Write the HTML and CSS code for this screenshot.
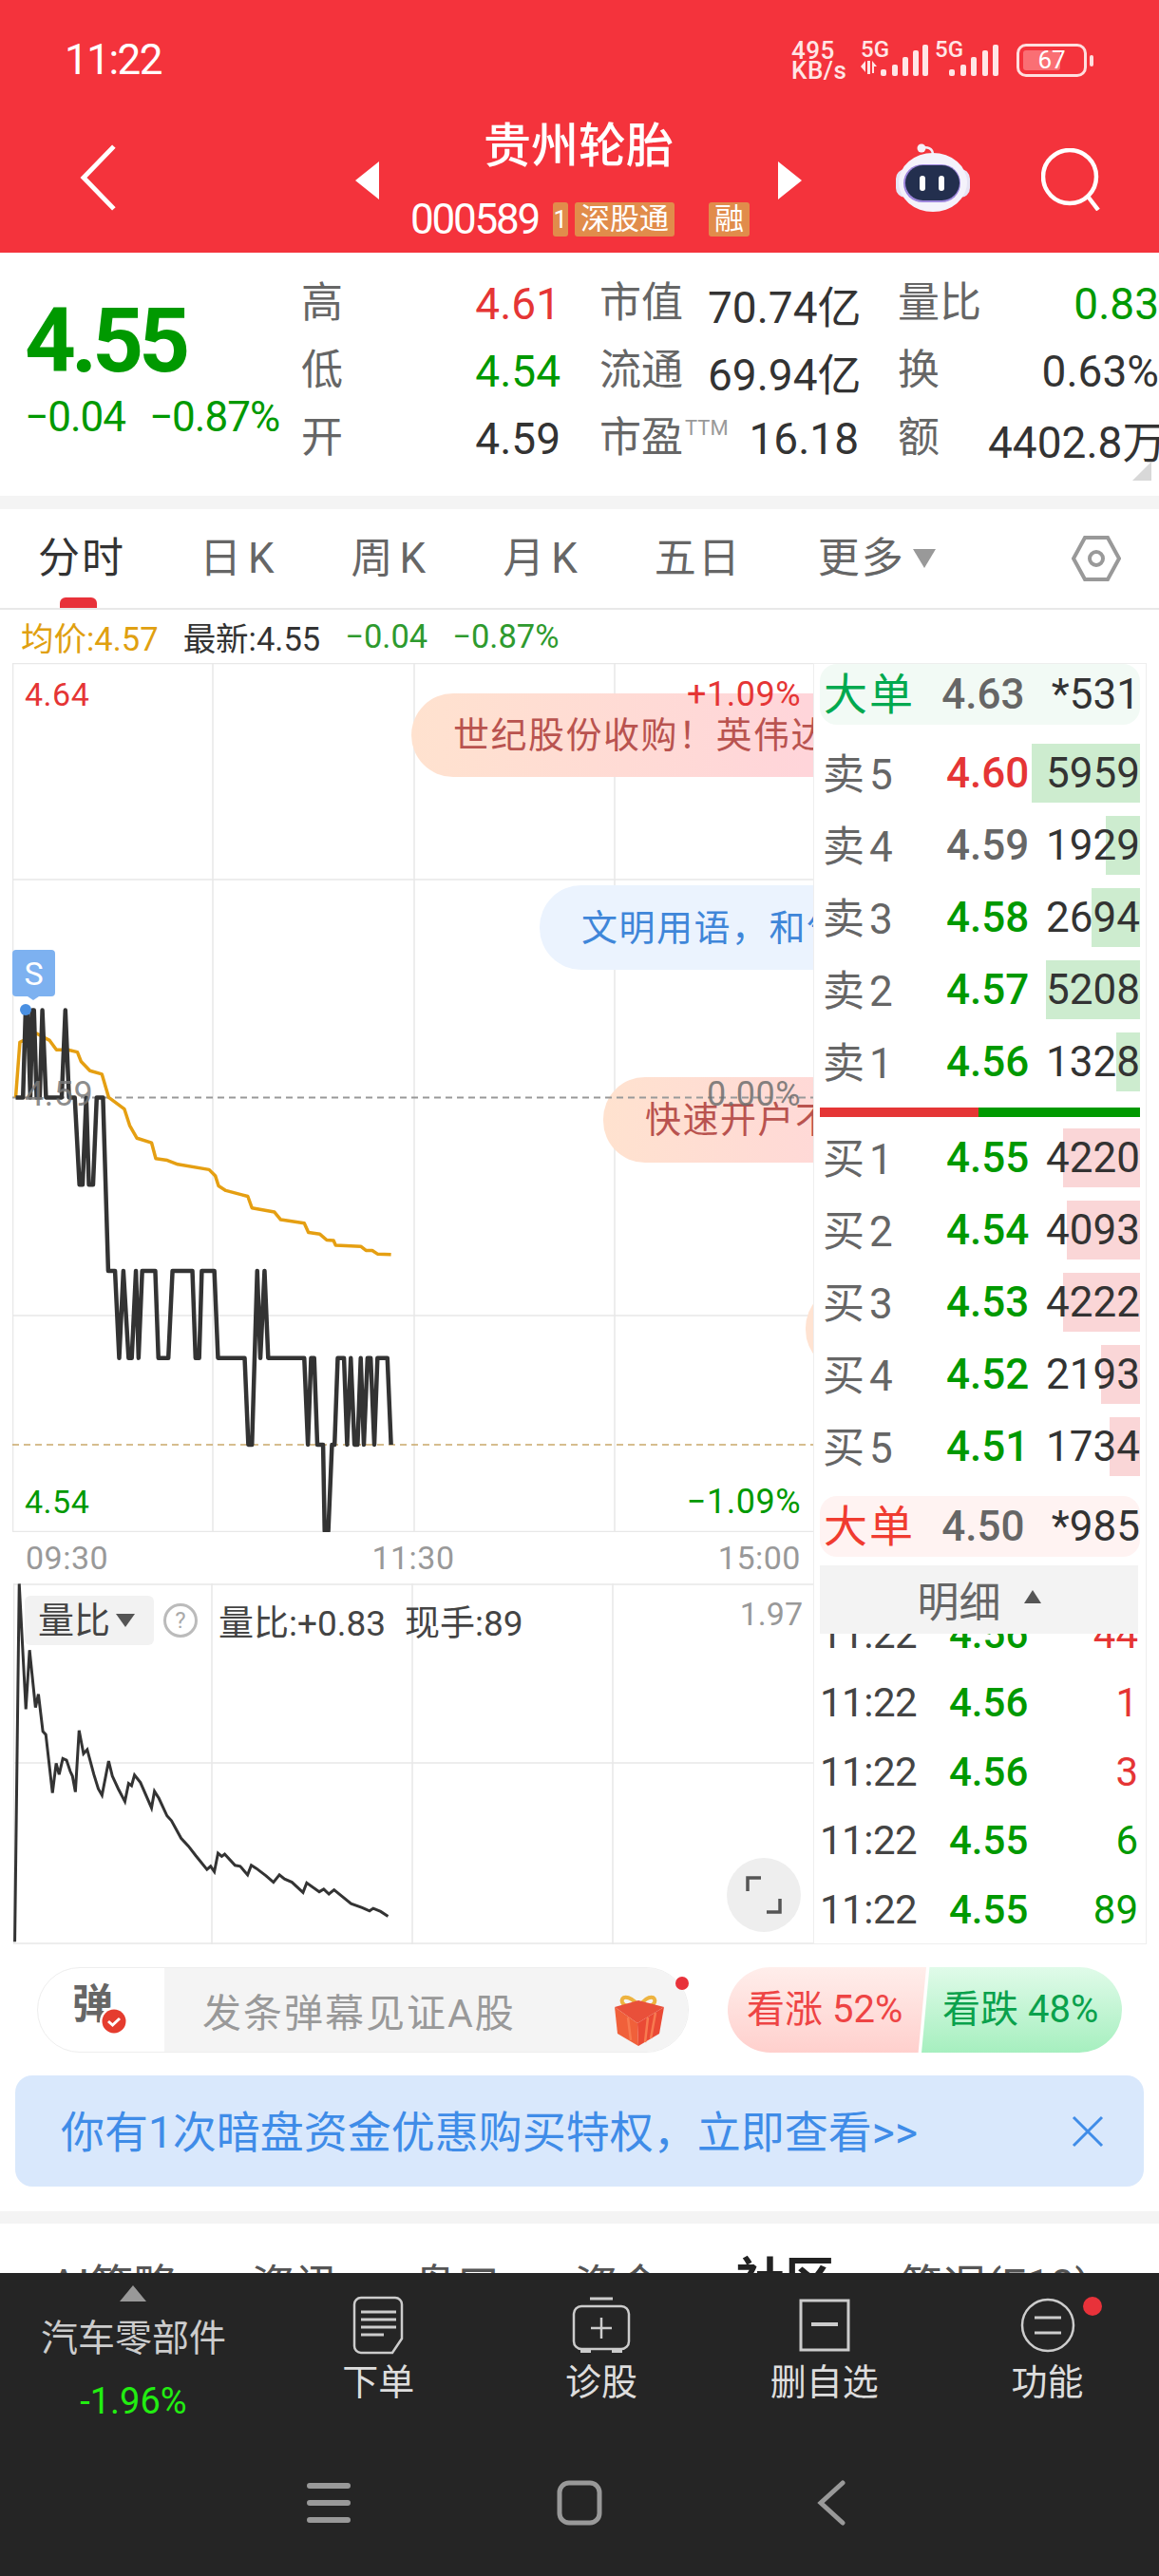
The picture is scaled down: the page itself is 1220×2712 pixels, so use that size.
FILE: index.html
```html
<!DOCTYPE html>
<html lang="zh">
<head>
<meta charset="utf-8">
<title>贵州轮胎</title>
<link rel="stylesheet" href="styles.css">
</head>
<body>
<div class="page">
  <header class="head">
    <div class="status">
      <span class="clock">11:22</span>
      <div class="sys">
        <div class="speed"><span>495</span><span>KB/s</span></div>
        <div class="sim"><span>5G</span>
          <svg width="72" height="34" viewBox="0 0 72 34"><g fill="#ffe6e6"><path d="M0 23 L5 17 V29 Z M7 17 H10 V31 H7 Z M12 17 L17 23 H14 V30 H12 Z"/><rect x="21" y="26" width="6" height="7" rx="2"/><rect x="33" y="21" width="6" height="12" rx="2"/><rect x="44" y="13" width="6" height="20" rx="2"/><rect x="55" y="6" width="6" height="27" rx="2"/><rect x="65" y="0" width="6" height="33" rx="2"/></g></svg>
        </div>
        <div class="sim"><span>5G</span>
          <svg width="54" height="34" viewBox="0 0 54 34"><g fill="#ffe6e6"><rect x="0" y="26" width="6" height="7" rx="2"/><rect x="12" y="21" width="6" height="12" rx="2"/><rect x="23" y="13" width="6" height="20" rx="2"/><rect x="35" y="6" width="6" height="27" rx="2"/><rect x="46" y="0" width="6" height="33" rx="2"/></g></svg>
        </div>
        <div class="batt"><div class="batt-body"><span class="batt-fill"></span><span class="batt-num">67</span></div><span class="batt-cap"></span></div>
      </div>
    </div>
    <div class="nav">
      <svg class="back" width="40" height="70" viewBox="0 0 40 70"><path d="M36 2 L4 35 L36 68" fill="none" stroke="#fff" stroke-width="5"/></svg>
      <div class="title-wrap">
        <span class="tri-l"></span>
        <div class="title">
          <div class="name">贵州轮胎</div>
          <div class="code"><span class="code-num">000589</span><span class="tag tag-i">1</span><span class="tag tag-s">深股通</span><span class="tag tag-r">融</span></div>
        </div>
        <span class="tri-r"></span>
      </div>
      <svg class="robot" width="78" height="76" viewBox="0 0 78 76">
        <path d="M27 6 C33 4 39 6 39 13" fill="none" stroke="#f2eef8" stroke-width="2.5"/>
        <circle cx="27" cy="6" r="4.5" fill="#f6f1fa"/>
        <rect x="0" y="28" width="78" height="30" rx="10" fill="#e6e4f4"/>
        <ellipse cx="39" cy="42" rx="36" ry="31" fill="#f4f2fb"/>
        <rect x="8" y="23" width="60" height="40" rx="20" fill="#9d86dc"/>
        <rect x="10" y="24" width="57" height="37" rx="18.5" fill="#232f4e"/>
        <rect x="25" y="35" width="6" height="16" rx="3" fill="#fff"/>
        <rect x="45" y="35" width="6" height="16" rx="3" fill="#fff"/>
      </svg>
      <svg class="search" width="64" height="66" viewBox="0 0 64 66"><circle cx="30" cy="30" r="28" fill="none" stroke="#fff" stroke-width="4.5"/><path d="M50 52 L60 65" stroke="#fff" stroke-width="4.5"/></svg>
    </div>
  </header>

  <section class="quote">
    <div class="now">
      <div class="price">4.55</div>
      <div class="chg"><span>−0.04</span><span>−0.87%</span></div>
    </div>
    <div class="stats">
      <span class="lb">高</span><span class="val up">4.61</span><span class="lb lb-m">市值</span><span class="val">70.74亿</span><span class="lb lb-m">量比</span><span class="val down">0.83</span>
      <span class="lb">低</span><span class="val down">4.54</span><span class="lb lb-m">流通</span><span class="val">69.94亿</span><span class="lb lb-m">换</span><span class="val">0.63%</span>
      <span class="lb">开</span><span class="val">4.59</span><span class="lb lb-m">市盈<sup class="ttm">TTM</sup></span><span class="val">16.18</span><span class="lb lb-m">额</span><span class="val">4402.8万</span>
    </div>
    <span class="corner"></span>
  </section>

  <nav class="tabs">
    <span class="tab tab-on">分时</span>
    <span class="tab tab-k">日K</span>
    <span class="tab tab-k">周K</span>
    <span class="tab tab-k">月K</span>
    <span class="tab">五日</span>
    <span class="tab tab-more">更多<i class="caret"></i></span>
    <svg class="hex" width="52" height="50" viewBox="0 0 52 50"><path d="M14 3 H38 L50 25 L38 47 H14 L2 25 Z" fill="none" stroke="#999" stroke-width="4"/><circle cx="26" cy="25" r="7" fill="none" stroke="#999" stroke-width="4"/></svg>
  </nav>

  <div class="legend">
    <span class="lg-avg">均价:4.57</span><span class="lg-new">最新:4.55</span><span class="lg-d">−0.04</span><span class="lg-d">−0.87%</span>
  </div>

  <div class="board">
    <div class="charts">
      <div class="price-chart">
        <svg class="plot" width="847" height="915" viewBox="13 698 847 915">
          <g class="grid">
            <path d="M13 698.5H860M13 926H860M13 1385H860M13 1612.5H860M13.5 698V1613M224 698V1613M436 698V1613M647 698V1613"/>
          </g>
          <g class="pills">
            <rect x="433" y="730" width="520" height="88" rx="44" fill="url(#pw)"/>
            <rect x="568" y="932" width="400" height="89" rx="44" fill="#ebf3fe"/>
            <rect x="635" y="1134" width="400" height="90" rx="44" fill="url(#pw)"/>
            <rect x="848" y="1354" width="300" height="90" rx="44" fill="#ffe3d2"/>
          </g>
          <defs><linearGradient id="pw" x1="0" x2="1" y1="0" y2="0"><stop offset="0" stop-color="#ffe2cf"/><stop offset=".8" stop-color="#ffd5da"/></linearGradient></defs>
          <path class="dash-gray" d="M13 1155.5H860"/>
          <path class="dash-gold" d="M13 1521H860"/>
          <g transform="translate(0,690) scale(.5503,.6124)">
            <polyline class="ln-avg" points="30,760 38,665 50,660 70,650 95,662 108,678 130,678 148,682 155,698 172,714 195,720 208,760 238,780 248,808 262,830 290,838 298,865 320,868 340,875 400,884 412,895 418,912 432,920 474,930 482,950 525,957 537,970 582,976 590,992 612,995 625,1005 638,1006 642,1014 690,1016 700,1023 712,1023 722,1029 748,1030"/>
            <polyline class="ln-px" points="30,760 44,760 49,610 53,610 58,760 62,610 65,610 70,760 76,760 81,610 88,760 118,760 125,610 132,760 143,760 152,910 158,910 165,760 170,910 178,910 185,760 197,760 207,1058 220,1058 228,1208 236,1058 246,1208 252,1208 260,1058 265,1208 272,1058 297,1058 303,1208 322,1208 330,1058 368,1058 374,1208 381,1208 386,1058 410,1058 417,1208 468,1208 475,1357 482,1357 492,1058 498,1208 506,1058 513,1208 582,1208 589,1357 595,1208 601,1208 607,1357 618,1357 621,1505 628,1505 635,1357 640,1357 646,1208 658,1208 664,1357 671,1208 678,1357 684,1357 690,1208 696,1357 703,1208 709,1208 716,1357 722,1208 741,1208 748,1357"/>
          </g>
          <circle cx="27" cy="1063" r="6" fill="#4a90e2"/>
          <path d="M13 1004a4 4 0 0 1 4-4h37a4 4 0 0 1 4 4v41a4 4 0 0 1-4 4H41l-6 4-6-4H17a4 4 0 0 1-4-4z" fill="#7db1f0"/>
        </svg>
        <span class="s-mark">S</span>
        <span class="pill-t pt1">世纪股份收购！英伟达</span>
        <span class="pill-t pt2">文明用语，和气</span>
        <span class="pill-t pt3">快速开户不</span>
        <span class="ax ax-tl up">4.64</span>
        <span class="ax ax-tr up">+1.09%</span>
        <span class="ax ax-ml">4.59</span>
        <span class="ax ax-mr">0.00%</span>
        <span class="ax ax-bl down">4.54</span>
        <span class="ax ax-br down">−1.09%</span>
      </div>
      <div class="times"><span>09:30</span><span>11:30</span><span>15:00</span></div>
      <div class="vol-chart">
        <svg class="plot" width="842" height="380" viewBox="14 1667 842 380">
          <g class="grid"><path d="M14 1668H856M14 1856H856M14 2046H856M14.5 1667V2047M223 1667V2047M434 1667V2047M645 1667V2047"/></g>
          <g transform="translate(0,1650) scale(.778,.3356)">
            <polyline class="ln-vol" points="20,1175 26,52 35,445 40,260 48,440 52,398 58,515 62,525 71,708 76,615 80,650 85,600 90,605 95,640 98,655 102,705 107,512 113,585 118,572 127,650 133,695 138,715 147,608 152,655 160,695 169,735 174,678 178,685 182,652 190,675 205,755 209,703 215,725 226,780 232,795 245,850 255,875 265,905 280,948 285,938 290,955 295,897 300,907 304,900 318,935 325,938 335,965 340,935 347,945 360,968 370,988 378,965 385,978 395,988 410,1020 415,990 432,1018 438,1010 445,1025 452,1012 475,1055 490,1068 500,1078 505,1070 515,1080 525,1095"/>
          </g>
        </svg>
        <div class="vol-bar">
          <span class="chip">量比<i class="chip-caret"></i></span>
          <span class="qmark">?</span>
          <span class="vol-txt">量比:+0.83</span>
          <span class="vol-txt">现手:89</span>
        </div>
        <span class="vol-max">1.97</span>
        <span class="expand"><svg width="38" height="40" viewBox="0 0 38 40"><path d="M2 16V2H16M36 24V38H22" fill="none" stroke="#555" stroke-width="3.5"/></svg></span>
      </div>
    </div>

    <aside class="side">
      <div class="big big-g"><span class="big-l lg">大单</span><span class="p gray">4.63</span><span class="q">*531</span></div>
      <div class="book book-s">
        <div class="row"><span class="l">卖5</span><span class="p up">4.60</span><span class="q"><i class="bar bar-g" style="width:114px"></i><b>5959</b></span></div>
        <div class="row"><span class="l">卖4</span><span class="p gray">4.59</span><span class="q"><i class="bar bar-g" style="width:36px"></i><b>1929</b></span></div>
        <div class="row"><span class="l">卖3</span><span class="p down">4.58</span><span class="q"><i class="bar bar-g" style="width:51px"></i><b>2694</b></span></div>
        <div class="row"><span class="l">卖2</span><span class="p down">4.57</span><span class="q"><i class="bar bar-g" style="width:99px"></i><b>5208</b></span></div>
        <div class="row"><span class="l">卖1</span><span class="p down">4.56</span><span class="q"><i class="bar bar-g" style="width:25px"></i><b>1328</b></span></div>
      </div>
      <div class="split"><i class="split-r"></i><i class="split-g"></i></div>
      <div class="book book-b">
        <div class="row"><span class="l">买1</span><span class="p down">4.55</span><span class="q"><i class="bar bar-r" style="width:81px"></i><b>4220</b></span></div>
        <div class="row"><span class="l">买2</span><span class="p down">4.54</span><span class="q"><i class="bar bar-r" style="width:77px"></i><b>4093</b></span></div>
        <div class="row"><span class="l">买3</span><span class="p down">4.53</span><span class="q"><i class="bar bar-r" style="width:81px"></i><b>4222</b></span></div>
        <div class="row"><span class="l">买4</span><span class="p down">4.52</span><span class="q"><i class="bar bar-r" style="width:41px"></i><b>2193</b></span></div>
        <div class="row"><span class="l">买5</span><span class="p down">4.51</span><span class="q"><i class="bar bar-r" style="width:32px"></i><b>1734</b></span></div>
      </div>
      <div class="big big-r"><span class="big-l lr">大单</span><span class="p gray">4.50</span><span class="q">*985</span></div>
      <div class="ticks">
        <div class="tick"><span>11:22</span><span class="down">4.56</span><span class="up">44</span></div>
        <div class="tick"><span>11:22</span><span class="down">4.56</span><span class="up">1</span></div>
        <div class="tick"><span>11:22</span><span class="down">4.56</span><span class="up">3</span></div>
        <div class="tick"><span>11:22</span><span class="down">4.55</span><span class="down">6</span></div>
        <div class="tick"><span>11:22</span><span class="down">4.55</span><span class="down">89</span></div>
      </div>
      <div class="detail-h">明细<i class="up-tri"></i></div>
    </aside>
  </div>

  <div class="comment">
    <div class="input">
      <div class="dan"><span class="dan-c">弹</span><svg class="dan-ok" width="30" height="30" viewBox="0 0 30 30"><circle cx="15" cy="15" r="15" fill="#fff"/><circle cx="15" cy="15" r="12.5" fill="#e53c2e"/><path d="M9 15 L13.5 19 L21 12" fill="none" stroke="#fff" stroke-width="3"/></svg></div>
      <div class="ph"><span>发条弹幕见证A股</span>
        <svg class="gift" width="54" height="58" viewBox="0 0 54 58">
          <path d="M25 13 C14 1 6 4 8 10 C10 15 19 15 25 13 C31 15 40 15 42 10 C44 4 36 1 27 13" fill="none" stroke="#edb33f" stroke-width="4"/>
          <path d="M0 15 L25 8 L52 15 L24 32 Z" fill="#e9503a"/>
          <path d="M0 15 L24 32 L25 56 L3 43 Z" fill="#f0603a"/>
          <path d="M52 15 L24 32 L25 56 L47 43 Z" fill="#ea4a35"/>
          <path d="M14 26 L17 50 M35 26 L32 52 M43 21 L38 48" stroke="#f77a50" stroke-width="2.5" fill="none"/>
        </svg>
        <i class="ph-dot"></i>
      </div>
    </div>
    <div class="senti">
      <span class="s-up">看涨 52%</span>
      <span class="s-dn">看跌 48%</span>
    </div>
  </div>

  <div class="banner">
    <span class="ban-t">你有1次暗盘资金优惠购买特权，立即查看&gt;&gt;</span>
    <svg width="34" height="34" viewBox="0 0 34 34"><path d="M2 2 L32 32 M32 2 L2 32" stroke="#3f8ce8" stroke-width="3" fill="none"/></svg>
  </div>

  <div class="divider"></div>
  <div class="subtabs">
    <span>AI策略</span><span>资讯</span><span>盘口</span><span>资金</span><span class="sub-on">社区</span><span>简况(F10)</span>
  </div>

  <footer class="dock">
    <div class="actions">
      <div class="sector"><i class="sec-tri"></i><span class="sec-n">汽车零部件</span><span class="sec-v">-1.96%</span></div>
      <div class="act">
        <svg width="54" height="62" viewBox="0 0 54 62"><path d="M9 2H45A7 7 0 0 1 52 9V45L42 60H9A7 7 0 0 1 2 53V9A7 7 0 0 1 9 2Z" fill="none" stroke="#ccc" stroke-width="2.5"/><path d="M9 17H46M9 25H46M9 33H46M9 41H33" stroke="#ccc" stroke-width="3"/></svg>
        <span>下单</span>
      </div>
      <div class="act">
        <svg width="62" height="62" viewBox="0 0 62 62"><path d="M19 3H43" stroke="#ccc" stroke-width="3" fill="none"/><path d="M9 56H20V60H9ZM42 56H53V60H42Z" fill="#ccc"/><rect x="2" y="11" width="58" height="45" rx="8" fill="none" stroke="#ccc" stroke-width="2.5"/><path d="M31 23V45M20 34H42" stroke="#ccc" stroke-width="2.5"/></svg>
        <span>诊股</span>
      </div>
      <div class="act">
        <svg width="54" height="62" viewBox="0 0 54 62"><rect x="2" y="5" width="50" height="52" fill="none" stroke="#ccc" stroke-width="3"/><path d="M13 30H41" stroke="#ccc" stroke-width="4"/></svg>
        <span>删自选</span>
      </div>
      <div class="act act-fn">
        <svg width="58" height="62" viewBox="0 0 58 62"><ellipse cx="29" cy="31" rx="27" ry="27" fill="none" stroke="#ccc" stroke-width="2.5"/><path d="M15 23H43M15 39H43" stroke="#ccc" stroke-width="3"/></svg>
        <span>功能</span>
        <i class="fn-dot"></i>
      </div>
    </div>
    <div class="sysnav">
      <svg width="46" height="44" viewBox="0 0 46 44"><path d="M3 4H43M3 22H43M3 40H43" stroke="#999" stroke-width="6" stroke-linecap="round"/></svg>
      <svg width="48" height="48" viewBox="0 0 48 48"><rect x="3" y="3" width="42" height="42" rx="10" fill="none" stroke="#999" stroke-width="5"/></svg>
      <svg width="30" height="48" viewBox="0 0 30 48"><path d="M27 3 L4 24 L27 45" fill="none" stroke="#999" stroke-width="5" stroke-linecap="round"/></svg>
    </div>
  </footer>
</div>
</body>
</html>
```
FILE: styles.css
```css
* { box-sizing: border-box; }
html, body { margin: 0; padding: 0; background: #fff; }
body { font-family: Roboto, "Noto Sans CJK SC", "Liberation Sans", sans-serif; color: #333; }
i { display: block; font-style: normal; }
.page { width: 1220px; height: 2712px; overflow: hidden; position: relative; }
.up { color: #e53535; }
.down { color: #009900; }
.gray { color: #666; }

/* header */
.head { height: 266px; background: #f4333c; color: #fff; padding-top: 40px; }
.status { height: 46px; display: flex; justify-content: space-between; align-items: center; padding: 0 69px 0 68px; }
.clock { font-size: 44px; line-height: 46px; color: #fff; letter-spacing: -1.5px; }
.sys { display: flex; align-items: flex-start; height: 46px; }
.speed { display: flex; flex-direction: column; font-size: 26px; line-height: 21px; font-weight: 500; width: 70px; color: #ffe6e6; margin-top: 3px; white-space: nowrap; letter-spacing: .5px; }
.sim { position: relative; height: 46px; }
.sim:nth-child(2) { width: 78px; }
.sim:nth-child(3) { width: 72px; }
.sim span { position: absolute; left: 3px; top: 1px; font-size: 24px; line-height: 22px; font-weight: 500; color: #ffe6e6; }
.sim svg { position: absolute; right: 0; top: 7px; }
.sim:nth-child(2) svg { right: 3px; }
.batt { display: flex; align-items: center; gap: 3px; margin-left: 17px; margin-top: 6px; }
.batt-body { width: 74px; height: 35px; border: 3px solid #ffdfdf; border-radius: 10px; position: relative; }
.batt-fill { position: absolute; left: 4px; top: 4px; bottom: 4px; width: 39px; background: #fa6f74; border-radius: 3px; }
.batt-num { position: absolute; left: 0; right: 0; top: -1px; text-align: center; font-size: 26px; line-height: 30px; color: #fff; }
.batt-cap { width: 4px; height: 12px; background: #ffdfdf; border-radius: 2px; }
.nav { height: 124px; margin-top: 34px; display: flex; align-items: center; padding: 0 60px 0 84px; }
.back { margin-top: 10px; }
.title-wrap { display: flex; align-items: center; margin-left: 250px; width: 472px; height: 124px; }
.tri-l, .tri-r { width: 0; height: 0; flex: none; border-top: 20px solid transparent; border-bottom: 20px solid transparent; margin-top: 16px; }
.tri-l { border-right: 25px solid #fff; }
.tri-r { border-left: 25px solid #fff; }
.title { flex: 1; align-self: flex-start; display: flex; flex-direction: column; align-items: center; padding-top: 4px; }
.name { font-size: 50px; line-height: 60px; font-weight: 500; }
.code { display: flex; align-items: center; height: 38px; margin-top: 28px; margin-left: 3px; white-space: nowrap; }
.code-num { font-size: 44px; line-height: 38px; margin-right: 14px; letter-spacing: -2.2px; flex: none; width: 136px; }
.tag { background: #e18c4b; color: #fff; height: 36px; font-size: 26px; line-height: 36px; text-align: center; border-radius: 3px; flex: none; }
.tag-i { width: 16px; margin-right: 7px; }
.tag-s { width: 105px; margin-right: 36px; font-size: 31px; }
.tag-r { width: 43px; font-size: 31px; }
.robot { margin-left: 99px; margin-top: 12px; flex: none; }
.search { margin-left: 75px; margin-top: 14px; flex: none; }

/* quote */
.quote { height: 256px; display: flex; position: relative; }
.now { width: 318px; padding-left: 26px; }
.price { font-size: 94px; line-height: 94px; font-weight: 700; color: #009900; margin-top: 46px; letter-spacing: -5px; }
.chg { display: flex; gap: 25px; font-size: 44px; line-height: 50px; color: #009900; margin-top: 8px; white-space: nowrap; letter-spacing: -1px; }
.stats { display: grid; grid-template-columns: 46px 226px 155px 159px 136px 180px; grid-auto-rows: 71px; width: 902px; align-items: center; padding-top: 18px; }
.lb { font-size: 44px; color: #666; line-height: 71px; white-space: nowrap; margin-left: -1px; }
.lb-m { margin-left: 41px; }
.val { font-size: 46px; text-align: right; color: #333; white-space: nowrap; }
.val.up { color: #e53535; }
.val.down { color: #009900; }
.ttm { font-size: 22px; color: #999; vertical-align: 18px; line-height: 0; margin-left: 2px; }
.corner { position: absolute; right: 8px; bottom: 16px; width: 0; height: 0; border-left: 20px solid transparent; border-bottom: 20px solid #d8d8d8; }

/* tabs */
.tabs { height: 120px; border-bottom: 2px solid #e8e8e8; display: flex; align-items: center; position: relative; padding: 14px 40px 0 40px; box-shadow: inset 0 14px 0 #f4f4f4; background: #fff; }
.tab { font-size: 44px; color: #666; margin-right: 76px; line-height: 60px; white-space: nowrap; position: relative; letter-spacing: 2px; }
.tab-k { letter-spacing: 7px; margin-right: 74px; }
.tab-on { color: #333; margin-right: 78px; }
.tab-on::after { content: ""; position: absolute; left: 23px; top: 71px; width: 39px; height: 11px; background: #e8323a; border-radius: 6px 6px 0 0; }
.tab-more { display: flex; align-items: center; gap: 8px; margin-left: 4px; margin-right: 0; }
.caret { width: 0; height: 0; border-left: 12px solid transparent; border-right: 12px solid transparent; border-top: 20px solid #999; }
.hex { margin-left: auto; }

/* legend */
.legend { height: 56px; display: flex; align-items: center; font-size: 34.5px; padding-left: 22px; white-space: nowrap; }
.lg-avg { color: #e0a010; margin-right: 26px; }
.lg-new { color: #333; margin-right: 26px; }
.lg-d { color: #2e9a2e; margin-right: 26px; }

/* board */
.board { height: 1349px; display: flex; padding-left: 13px; }
.charts { width: 843px; flex: none; position: relative; z-index: 0; }
.price-chart { height: 915px; width: 847px; position: relative; overflow: hidden; }
.plot { display: block; }
.grid path { stroke: #e8e8e8; stroke-width: 1.5; fill: none; }
.dash-gray { stroke: #999; stroke-width: 2; stroke-dasharray: 7 5; fill: none; }
.dash-gold { stroke: #c9a86a; stroke-width: 1.5; stroke-dasharray: 7 5; fill: none; }
.ln-avg { fill: none; stroke: #e59f12; stroke-width: 3.5; vector-effect: non-scaling-stroke; stroke-linejoin: round; }
.ln-px { fill: none; stroke: #333; stroke-width: 4.5; vector-effect: non-scaling-stroke; stroke-linejoin: round; }
.ln-vol { fill: none; stroke: #333; stroke-width: 3; vector-effect: non-scaling-stroke; }
.s-mark { position: absolute; left: 0; top: 302px; width: 45px; text-align: center; color: #fff; font-size: 34px; line-height: 50px; }
.pill-t { position: absolute; font-size: 38px; line-height: 46px; white-space: nowrap; letter-spacing: 1.5px; }
.pt1 { left: 464px; top: 53px; color: #b9534f; }
.pt2 { left: 599px; top: 256px; color: #3f86d9; }
.pt3 { left: 666px; top: 458px; color: #b9534f; }
.ax { position: absolute; font-size: 34px; line-height: 40px; letter-spacing: .5px; white-space: nowrap; }
.ax-tl { left: 13px; top: 13px; }
.ax-tr { right: 17px; top: 13px; font-size: 36px; }
.ax-ml { left: 13px; top: 434px; font-size: 36px; color: rgba(120,120,120,.85); }
.ax-mr { right: 17px; top: 434px; font-size: 36px; color: rgba(110,110,110,.85); }
.ax-bl { left: 13px; top: 863px; }
.ax-br { right: 17px; top: 863px; font-size: 36px; }
.times { height: 54px; width: 847px; display: flex; justify-content: space-between; align-items: center; padding: 0 17px 0 14px; font-size: 34px; color: #999; letter-spacing: .5px; }
.vol-chart { height: 380px; width: 843px; margin-left: 1px; position: relative; }
.vol-bar { position: absolute; left: 12px; top: 12px; display: flex; align-items: center; white-space: nowrap; }
.chip { width: 136px; height: 52px; background: #f2f2f2; border-radius: 6px; font-size: 38px; line-height: 52px; color: #444; padding-left: 14px; display: flex; align-items: center; gap: 6px; }
.chip-caret { width: 0; height: 0; border-left: 10px solid transparent; border-right: 10px solid transparent; border-top: 14px solid #555; }
.qmark { width: 36px; height: 36px; border: 3px solid #bbb; border-radius: 50%; margin: 0 22px 0 10px; text-align: center; font-size: 24px; line-height: 30px; color: #aaa; }
.vol-txt { font-size: 37px; color: #444; margin-right: 20px; }
.vol-max { position: absolute; right: 12px; top: 12px; font-size: 34px; line-height: 40px; color: #999; }
.expand { position: absolute; left: 751px; top: 289px; width: 78px; height: 78px; border-radius: 50%; background: #eee; display: flex; align-items: center; justify-content: center; }

/* side */
.side { width: 351px; flex: none; border: 1.5px solid #eee; padding-left: 6px; padding-right: 6px; background: #fff; position: relative; height: 1349px; overflow: hidden; }
.big { height: 64px; border-radius: 18px; display: flex; align-items: center; font-size: 44px; padding-left: 4px; }
.big-g { background: #f2faf5; }
.big-r { background: #fff3f2; margin-top: 21px; }
.big-l { width: 130px; font-size: 46px; letter-spacing: 2px; margin-bottom: 8px; }
.lg { color: #00a94f; }
.lr { color: #f03c30; }
.big .p { width: 100px; font-size: 44px; }
.big .q { font-size: 44px; color: #333; margin-left: 20px; }
.book { display: flex; flex-direction: column; gap: 14px; }
.book-s { margin-top: 20px; }
.book-b { margin-top: 12px; }
.row { height: 62px; display: flex; align-items: center; padding-left: 3px; font-size: 44px; }
.l { width: 130px; color: #666; letter-spacing: 5px; margin-bottom: 5px; }
.p { width: 100px; font-weight: 500; }
.book .p { font-size: 44px; }
.q { flex: 1; height: 62px; line-height: 62px; position: relative; text-align: right; }
.q b { position: relative; font-weight: 400; color: #333; font-size: 44px; }
.bar { position: absolute; right: 0; top: 0; height: 62px; }
.bar-g { background: #cdeccf; }
.bar-r { background: #fad6d7; }
.split { display: flex; height: 10px; margin-top: 17px; }
.split-r { width: 167px; background: #e53535; }
.split-g { flex: 1; background: #009900; }
.detail-h { position: absolute; left: 6px; right: 8px; top: 949px; height: 72px; background: #f3f3f3; display: flex; align-items: center; justify-content: center; gap: 24px; font-size: 44px; color: #666; }
.up-tri { width: 0; height: 0; border-left: 9px solid transparent; border-right: 9px solid transparent; border-bottom: 14px solid #555; margin-bottom: 6px; }
.ticks { position: absolute; left: 6px; right: 8px; top: 985px; }
.tick { height: 72.5px; display: flex; align-items: center; justify-content: space-between; font-size: 42px; color: #444; }
.tick span:nth-child(1) { width: 136px; letter-spacing: -.5px; }
.tick span:nth-child(2) { width: 100px; font-weight: 500; }
.tick span:nth-child(3) { flex: 1; text-align: right; }

/* comment */
.comment { display: flex; height: 90px; margin-top: 24px; padding-left: 39px; }
.input { width: 686px; height: 90px; border: 1.5px solid #eee; border-radius: 45px; display: flex; }
.dan { width: 133px; position: relative; }
.dan-c { position: absolute; left: 36px; top: 13px; font-size: 43px; line-height: 50px; font-weight: 700; color: #666; }
.dan-ok { position: absolute; left: 65px; top: 41px; }
.ph { flex: 1; background: #f4f4f4; border-radius: 0 45px 45px 0; position: relative; display: flex; align-items: center; padding-left: 40px; font-size: 41px; letter-spacing: 2px; color: #999; }
.gift { position: absolute; left: 474px; top: 26px; }
.ph-dot { position: absolute; left: 538px; top: 9px; width: 14px; height: 14px; border-radius: 50%; background: #e8323a; }
.senti { width: 415px; height: 90px; margin-left: 41px; border-radius: 45px; overflow: hidden; position: relative; display: flex; font-size: 40px; }
.s-up, .s-dn { height: 90px; line-height: 90px; position: absolute; top: 0; white-space: nowrap; }
.s-up { left: 0; width: 209px; padding-left: 20px; color: #ee4444; background: linear-gradient(#ffeeeb, #ffd0cd); clip-path: polygon(0 0, 100% 0, 96% 100%, 0 100%); }
.s-dn { right: 0; width: 211px; padding-left: 22px; color: #0aa14c; background: linear-gradient(#e0fbe9, #a6efbf); clip-path: polygon(4% 0, 100% 0, 100% 100%, 0 100%); }

/* banner */
.banner { margin: 24px 16px 0; height: 117px; background: #d9e8fc; border-radius: 18px; display: flex; align-items: center; justify-content: space-between; padding: 0 42px 0 48px; font-size: 46px; color: #3f8ce8; white-space: nowrap; }
.ban-t { margin-bottom: 6px; }
.divider { height: 13px; background: #f4f4f4; margin-top: 26px; }
.subtabs { height: 52px; overflow: hidden; display: flex; padding: 35px 0 0 52px; font-size: 46px; line-height: 60px; color: #555; white-space: nowrap; align-items: flex-start; gap: 78px; }
.subtabs .sub-on { font-size: 52px; font-weight: 700; color: #222; margin-top: -3px; margin-right: -10px; }

/* dock */
.dock { height: 319px; background: #252525; position: relative; }
.actions { height: 192px; display: flex; }
.sector { width: 281px; display: flex; flex-direction: column; align-items: center; padding-top: 13px; }
.sec-tri { width: 0; height: 0; border-left: 14px solid transparent; border-right: 14px solid transparent; border-bottom: 17px solid #999; }
.sec-n { font-size: 39px; line-height: 46px; color: #ccc; margin-top: 16px; }
.sec-v { font-size: 38px; line-height: 46px; color: #22ee11; margin-top: 20px; }
.act { width: 235px; display: flex; flex-direction: column; align-items: center; padding-top: 24px; position: relative; color: #ddd; font-size: 38px; }
.act span { line-height: 46px; margin-top: 6px; }
.fn-dot { position: absolute; left: 155px; top: 25px; width: 20px; height: 20px; border-radius: 50%; background: #e8323a; }
.sysnav { display: flex; align-items: center; padding-left: 323px; height: 60px; margin-top: 20px; }
.sysnav svg:nth-child(1) { margin-right: 217px; }
.sysnav svg:nth-child(2) { margin-right: 226px; }
```
